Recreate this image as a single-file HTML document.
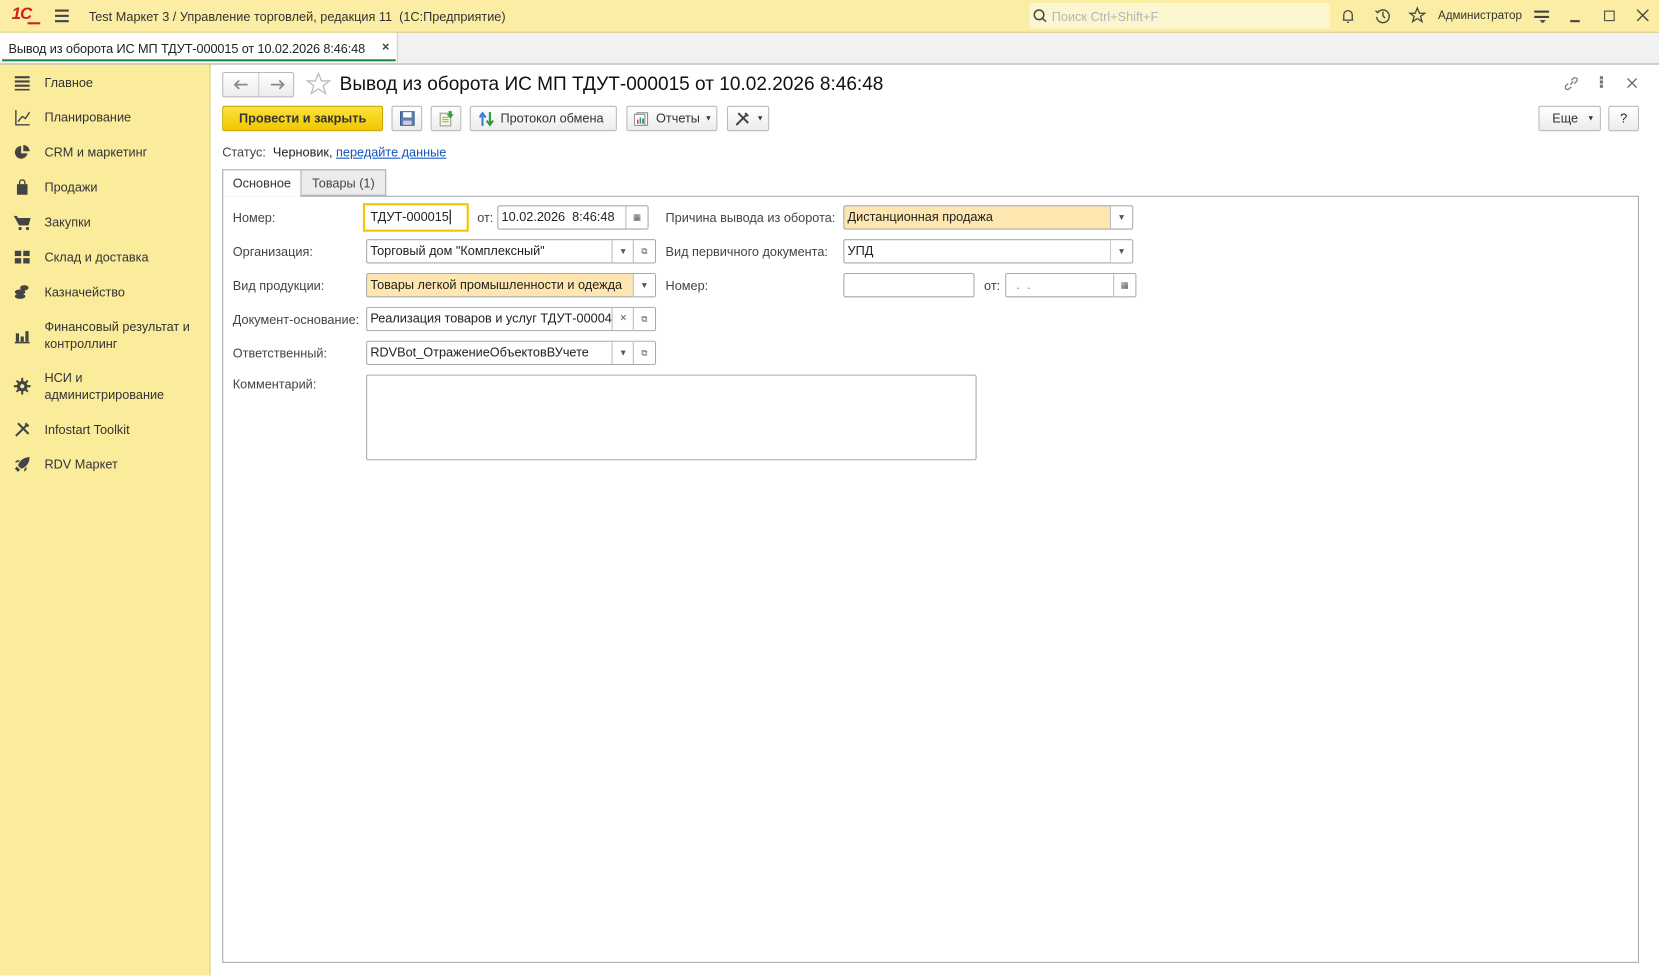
<!DOCTYPE html>
<html><head><meta charset="utf-8"><style>
html,body{margin:0;padding:0;width:1659px;height:976px;overflow:hidden;background:#fff}
#w{position:absolute;left:0;top:0;width:1568px;height:922px;transform:scale(1.0581);transform-origin:0 0;font-family:"Liberation Sans",Arial,sans-serif;font-size:12px;color:#333}
.a{position:absolute}
.top{left:0;top:0;width:1568px;height:30px;background:#fbeea4;border-bottom:1px solid #d8c97a}
.tabs{left:0;top:31px;width:1568px;height:29px;background:#f1f1f1;border-bottom:1px solid #aaa}
.side{left:0;top:61px;width:198px;height:861px;background:#fbec9c;border-right:1px solid #d8cc88}
.si{position:absolute;left:42px;font-size:12px;color:#333;line-height:16px}
.ic{position:absolute;left:13px;width:16px;height:16px}
.btn{position:absolute;height:24px;border:1px solid #b9b9b9;border-radius:2px;background:linear-gradient(#fff,#ececec);box-sizing:border-box;font-size:12px;line-height:22px;color:#333}
.lbl{position:absolute;color:#444;font-size:12px}
.f{position:absolute;height:23px;border:1px solid #a9a9a9;border-radius:2px;box-sizing:border-box;background:#fff;line-height:21px;padding-left:3px;font-size:12px;color:#222;overflow:hidden;white-space:nowrap}
.bb{position:absolute;top:0;width:20px;height:21px;border-left:1px solid #bbb;text-align:center;color:#555;font-size:8px;background:#fff}
</style></head><body><div id="w">
<div class="a top">
 <div class="a" style="left:11px;top:5px;color:#d41f1f;font-weight:bold;font-size:16px;letter-spacing:-1px;font-style:italic">1С</div>
 <div class="a" style="left:26px;top:21px;width:12px;height:1.5px;background:#d41f1f"></div>
 <div class="a" style="left:52px;top:9px;width:13px;height:1.5px;background:#444;box-shadow:0 5px 0 #444,0 10px 0 #444"></div>
 <div class="a" style="left:84px;top:9px;font-size:12px;color:#333">Test Маркет 3 / Управление торговлей, редакция 11 &nbsp;(1С:Предприятие)</div>
 <div class="a" style="left:973px;top:3px;width:284px;height:24px;background:#fcf6d0;border-radius:2px"></div>
 <svg class="a" style="left:976px;top:8px" width="14" height="14" viewBox="0 0 14 14" fill="none" stroke="#444" stroke-width="1.4"><circle cx="6" cy="6" r="4.5"/><path d="M9.5 9.5l3 3"/></svg>
 <div class="a" style="left:994px;top:9px;color:#b5b5b5">Поиск Ctrl+Shift+F</div>
 <svg class="a" style="left:1266px;top:7px" width="16" height="16" viewBox="0 0 16 16" fill="none" stroke="#444" stroke-width="1.2"><path d="M3 12h10M4 12V7a4 4 0 018 0v5M7 14h2"/></svg>
 <svg class="a" style="left:1299px;top:7px" width="16" height="16" viewBox="0 0 16 16" fill="none" stroke="#444" stroke-width="1.3"><path d="M3 5a6 6 0 11-1 4M1 3l2 2 2-2M8 4v4l2 2"/></svg>
 <svg class="a" style="left:1331px;top:6px" width="17" height="17" viewBox="0 0 17 17" fill="none" stroke="#444" stroke-width="1.2"><path d="M8.5 1.5l2 5h5l-4 3 1.5 5-4.5-3-4.5 3 1.5-5-4-3h5z"/></svg>
 <div class="a" style="left:1359px;top:9px;font-size:11px;color:#333">Администратор</div>
 <div class="a" style="left:1450px;top:10px;width:14px;height:1.5px;background:#444;box-shadow:0 5px 0 #444"></div>
 <div class="a" style="left:1455px;top:19px;width:0;height:0;border:3px solid transparent;border-top:3px solid #444"></div>
 <div class="a" style="left:1484px;top:19px;width:9px;height:1.5px;background:#444"></div>
 <div class="a" style="left:1516px;top:10px;width:8px;height:8px;border:1.5px solid #444"></div>
 <svg class="a" style="left:1547px;top:9px" width="11" height="11" viewBox="0 0 11 11" stroke="#444" stroke-width="1.3"><path d="M0 0l11 11M11 0L0 11"/></svg>
</div>
<div class="a tabs">
 <div class="a" style="left:0;top:0;width:375px;height:28px;background:#fff;border-right:1px solid #ccc"></div>
 <div class="a" style="left:8px;top:8px;color:#222;font-size:12px;letter-spacing:-0.1px">Вывод из оборота ИС МП ТДУТ-000015 от 10.02.2026 8:46:48</div>
 <div class="a" style="left:361px;top:6px;font-weight:bold;color:#444">×</div>
 <div class="a" style="left:2px;top:25px;width:372px;height:2px;background:#1a8a3a"></div>
</div>
<div class="a side">
 <svg class="ic" style="top:9px" viewBox="0 0 16 16" fill="#444"><rect x="1" y="2" width="14" height="2"/><rect x="1" y="6" width="14" height="2"/><rect x="1" y="10" width="14" height="2"/><rect x="1" y="14" width="14" height="1.5"/></svg><div class="si" style="top:9px">Главное</div>
 <svg class="ic" style="top:42px" viewBox="0 0 16 16" fill="none" stroke="#444" stroke-width="1.3"><path d="M2 1v14h13M4 12l4-5 3 2 4-6"/></svg><div class="si" style="top:42px">Планирование</div>
 <svg class="ic" style="top:75px" viewBox="0 0 16 16" fill="#444"><path d="M7 2a6 6 0 106 7H7z"/><path d="M9 1v6h6a6 6 0 00-6-6z"/></svg><div class="si" style="top:75px">CRM и маркетинг</div>
 <svg class="ic" style="top:108px" viewBox="0 0 16 16" fill="#444"><path d="M3 5h10v10H3z"/><path d="M5.5 5V3.5a2.5 2.5 0 015 0V5" fill="none" stroke="#444" stroke-width="1.3"/></svg><div class="si" style="top:108px">Продажи</div>
 <svg class="ic" style="top:141px" viewBox="0 0 16 16" fill="#444"><path d="M0 2h3l1 2h12l-2 7H5z"/><circle cx="6" cy="14" r="1.5"/><circle cx="13" cy="14" r="1.5"/></svg><div class="si" style="top:141px">Закупки</div>
 <svg class="ic" style="top:174px" viewBox="0 0 16 16" fill="#444"><rect x="1" y="2" width="6" height="5"/><rect x="9" y="2" width="6" height="5"/><rect x="1" y="9" width="6" height="5"/><rect x="9" y="9" width="6" height="5"/></svg><div class="si" style="top:174px">Склад и доставка</div>
 <svg class="ic" style="top:207px" viewBox="0 0 16 16" fill="#444"><ellipse cx="6" cy="12" rx="5" ry="2.5"/><ellipse cx="6" cy="8" rx="5" ry="2.5"/><ellipse cx="10" cy="4" rx="4" ry="2.5"/></svg><div class="si" style="top:207px">Казначейство</div>
 <svg class="ic" style="top:248px" viewBox="0 0 16 16" fill="#444"><rect x="2" y="6" width="3" height="8"/><rect x="6.5" y="9" width="3" height="5"/><rect x="11" y="4" width="3" height="10"/><rect x="1" y="14" width="14" height="1.5"/></svg><div class="si" style="top:240px">Финансовый результат и<br>контроллинг</div>
 <svg class="ic" style="top:296px" viewBox="0 0 16 16" fill="#444"><circle cx="8" cy="8" r="5"/><path d="M7 0h2v16H7zM0 7h16v2H0zM2 3.4l1.4-1.4 10.6 10.6-1.4 1.4zM12.6 2l1.4 1.4L3.4 14 2 12.6z"/><circle cx="8" cy="8" r="2" fill="#fbec9c"/></svg><div class="si" style="top:288px">НСИ и<br>администрирование</div>
 <svg class="ic" style="top:337px" viewBox="0 0 16 16" fill="none" stroke="#444" stroke-width="2"><path d="M2 14L12 4M4 2l10 10M11 2l3 3"/></svg><div class="si" style="top:337px">Infostart Toolkit</div>
 <svg class="ic" style="top:370px" viewBox="0 0 16 16" fill="#444"><path d="M15 1C9 1 5 5 4 9l3 3c4-1 8-5 8-11zM3 10l-2 2 3 3 2-2zM4 6H1l2-2h3zM10 12v3l2-2V10z"/></svg><div class="si" style="top:370px">RDV Маркет</div>
</div>
<!-- content -->
<div class="btn" style="left:210px;top:68px;width:68px"><svg style="position:absolute;left:10px;top:6px" width="14" height="10" viewBox="0 0 14 10" fill="none" stroke="#888" stroke-width="1.6"><path d="M1 5h12M5 1L1 5l4 4"/></svg><span style="position:absolute;left:33px;top:0;width:1px;height:22px;background:#ccc"></span><svg style="position:absolute;left:44px;top:6px" width="14" height="10" viewBox="0 0 14 10" fill="none" stroke="#888" stroke-width="1.6"><path d="M1 5h12M9 1l4 4-4 4"/></svg></div>
<svg class="a" style="left:289px;top:68px" width="24" height="23" viewBox="0 0 24 23" fill="none" stroke="#bbb" stroke-width="1.2"><path d="M12 1.5l3 7h7.5l-6 4.5 2.3 7.5L12 16l-6.8 4.5 2.3-7.5-6-4.5H9z"/></svg>
<div class="a" style="left:321px;top:69px;font-size:18px;color:#111">Вывод из оборота ИС МП ТДУТ-000015 от 10.02.2026 8:46:48</div>
<svg class="a" style="left:1477px;top:71px" width="16" height="16" viewBox="0 0 16 16" fill="none" stroke="#777" stroke-width="1.2"><path d="M7 9l3-3M5 8l-2 2a2 2 0 003 3l2-2M11 8l2-2a2 2 0 00-3-3L8 5"/></svg>
<div class="a" style="left:1512px;top:72px;width:3px;height:3px;background:#777;box-shadow:0 4px 0 #777,0 8px 0 #777"></div>
<svg class="a" style="left:1538px;top:74px" width="9" height="9" viewBox="0 0 9 9" stroke="#666" stroke-width="1.2"><path d="M0 0l9 9M9 0L0 9"/></svg>

<div class="btn" style="left:210px;top:100px;width:152px;background:linear-gradient(#fde23a,#f0c800);border-color:#c9a800;font-weight:bold;text-align:center;color:#333">Провести и закрыть</div>
<div class="btn" style="left:370px;top:100px;width:29px"><svg style="position:absolute;left:7px;top:4px" width="14" height="14" viewBox="0 0 14 14"><rect x="0.5" y="0.5" width="13" height="13" fill="#5a7fb5" stroke="#3b5a8a"/><rect x="3" y="1" width="8" height="5" fill="#fff"/><rect x="3" y="9" width="8" height="4" fill="#ccd"/></svg></div>
<div class="btn" style="left:407px;top:100px;width:29px"><svg style="position:absolute;left:7px;top:3px" width="15" height="16" viewBox="0 0 15 16"><rect x="1" y="3" width="10" height="12" fill="#f4f4d8" stroke="#999"/><path d="M3 7h6M3 9h6M3 11h6" stroke="#aaa"/><path d="M9 1h3v3h2l-3.5 4L7 4h2z" fill="#3aa03a"/></svg></div>
<div class="btn" style="left:444px;top:100px;width:139px"><svg style="position:absolute;left:8px;top:4px" width="14" height="15" viewBox="0 0 14 15"><path d="M3 14V4M0 6l3-4 3 4" stroke="#3a7fd0" stroke-width="2" fill="none"/><path d="M10 1v10M7 9l3 4 3-4" stroke="#2a9a3a" stroke-width="2" fill="none"/></svg><span style="position:absolute;left:28px">Протокол обмена</span></div>
<div class="btn" style="left:592px;top:100px;width:86px"><svg style="position:absolute;left:6px;top:5px" width="14" height="13" viewBox="0 0 14 13"><rect x="3" y="0.5" width="10" height="12" fill="#fff" stroke="#888"/><rect x="0.5" y="2" width="10" height="10.5" fill="#fff" stroke="#888"/><rect x="3" y="7" width="1.5" height="4" fill="#e33"/><rect x="5.5" y="5" width="1.5" height="6" fill="#3a3"/><rect x="8" y="6" width="1.5" height="5" fill="#36c"/></svg><span style="position:absolute;left:27px">Отчеты</span><span style="position:absolute;left:73px;font-size:7px;top:1px">▼</span></div>
<div class="btn" style="left:687px;top:100px;width:40px"><svg style="position:absolute;left:6px;top:4px" width="15" height="15" viewBox="0 0 16 16" fill="none" stroke="#444" stroke-width="2"><path d="M2 14L12 4M4 2l10 10M11 2l3 3"/></svg><span style="position:absolute;left:27px;font-size:7px;top:1px">▼</span></div>
<div class="btn" style="left:1454px;top:100px;width:59px"><span style="position:absolute;left:12px">Еще</span><span style="position:absolute;left:45px;font-size:7px;top:1px">▼</span></div>
<div class="btn" style="left:1520px;top:100px;width:29px;text-align:center;color:#222">?</div>

<div class="a" style="left:210px;top:137px;color:#444">Статус:&nbsp; <span style="color:#222">Черновик,</span> <span style="color:#1155bb;text-decoration:underline">передайте данные</span></div>

<div class="a" style="left:210px;top:185px;width:1339px;height:725px;border:1px solid #aaa;box-sizing:border-box"></div>
<div class="a" style="left:210px;top:160px;width:75px;height:26px;background:#fff;border:1px solid #aaa;border-bottom:none;box-sizing:border-box;text-align:center;line-height:24px;color:#333">Основное</div>
<div class="a" style="left:285px;top:160px;width:80px;height:25px;background:#ececec;border:1px solid #aaa;border-left:none;box-sizing:border-box;text-align:center;line-height:24px;color:#444">Товары (1)</div>

<div class="lbl" style="left:220px;top:199px">Номер:</div>
<div class="f" style="left:343px;top:192px;width:100px;height:27px;border:2px solid #f4c300;border-radius:0;line-height:23px;padding-left:5px">ТДУТ-000015<span style="border-left:1px solid #000;margin-left:1px"></span></div>
<div class="lbl" style="left:451px;top:199px">от:</div>
<div class="f" style="left:470px;top:194px;width:143px">10.02.2026 &nbsp;8:46:48<div class="bb" style="right:0">▦</div></div>

<div class="lbl" style="left:220px;top:231px">Организация:</div>
<div class="f" style="left:346px;top:226px;width:274px">Торговый дом "Комплексный"<div class="bb" style="right:20px">▼</div><div class="bb" style="right:0">⧉</div></div>
<div class="lbl" style="left:220px;top:263px">Вид продукции:</div>
<div class="f" style="left:346px;top:258px;width:274px;background:linear-gradient(90deg,#fde6b0 0,#fde6b0 252px,#fff 252px)">Товары легкой промышленности и одежда<div class="bb" style="right:0">▼</div></div>
<div class="lbl" style="left:220px;top:295px">Документ-основание:</div>
<div class="f" style="left:346px;top:290px;width:274px">Реализация товаров и услуг ТДУТ-00004<div class="bb" style="right:20px;font-size:11px">×</div><div class="bb" style="right:0">⧉</div></div>
<div class="lbl" style="left:220px;top:327px">Ответственный:</div>
<div class="f" style="left:346px;top:322px;width:274px">RDVBot_ОтражениеОбъектовВУчете<div class="bb" style="right:20px">▼</div><div class="bb" style="right:0">⧉</div></div>
<div class="lbl" style="left:220px;top:356px">Комментарий:</div>
<div class="f" style="left:346px;top:354px;width:577px;height:81px"></div>

<div class="lbl" style="left:629px;top:199px">Причина вывода из оборота:</div>
<div class="f" style="left:797px;top:194px;width:274px;background:linear-gradient(90deg,#fde6b0 0,#fde6b0 252px,#fff 252px)">Дистанционная продажа<div class="bb" style="right:0">▼</div></div>
<div class="lbl" style="left:629px;top:231px">Вид первичного документа:</div>
<div class="f" style="left:797px;top:226px;width:274px">УПД<div class="bb" style="right:0;border-left:1px solid #ccc">▼</div></div>
<div class="lbl" style="left:629px;top:263px">Номер:</div>
<div class="f" style="left:797px;top:258px;width:124px"></div>
<div class="lbl" style="left:930px;top:263px">от:</div>
<div class="f" style="left:950px;top:258px;width:124px;color:#888">&nbsp;&nbsp;. &nbsp;.<div class="bb" style="right:0;color:#555">▦</div></div>
</div></body></html>
